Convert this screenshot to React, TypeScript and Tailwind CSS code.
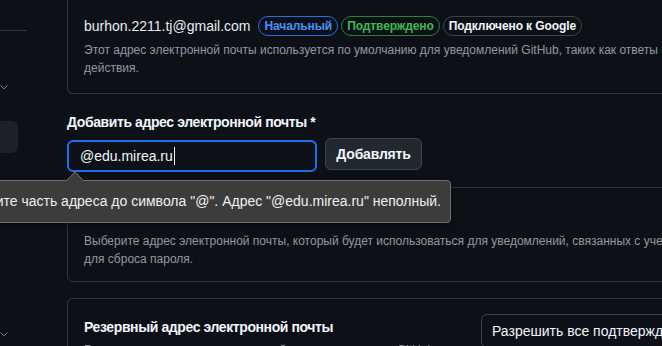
import React from "react";

const font = { fontFamily: '"Liberation Sans", "Noto Sans", sans-serif' };

function Chevron() {
  return (
    <svg width="10" height="10" viewBox="0 0 16 16" className="text-[#8b949e]">
      <path d="M3 6l5 5 5-5" fill="none" stroke="currentColor" strokeWidth="1.5" strokeLinecap="round" strokeLinejoin="round" />
    </svg>
  );
}

export default function App() {
  return (
    <div
      className="relative w-[662px] h-[346px] overflow-hidden bg-[#0d1117] flex text-[#e6edf3]"
      style={font}
    >
      {/* sidebar */}
      <div className="w-[67px] shrink-0 flex flex-col">
        <div className="mt-[30px] h-px w-[27px] bg-[#30363d]" />
        <div className="mt-[51px] -ml-[1px]">
          <Chevron />
        </div>
        <div className="mt-[29px] h-[32px] w-[18px] rounded-r-md bg-[#1c2128]" />
        <div className="mt-[176px] -ml-[1px]">
          <Chevron />
        </div>
      </div>

      {/* main */}
      <div className="w-[700px] shrink-0 flex flex-col">
        {/* card 1 */}
        <div className="border border-t-0 border-[#30363d] rounded-b-md px-4 pt-4 pb-4">
          <div className="flex items-center gap-[3px] h-5">
            <span className="text-[14px] leading-5 text-[#e6edf3] mr-[5px]">burhon.2211.tj@gmail.com</span>
            <span className="h-5 px-[5px] rounded-full border border-[#1f6feb] text-[#4493f8] text-[12px] font-semibold leading-[18px] tracking-[-0.1px]">
              Начальный
            </span>
            <span className="h-5 px-[5px] rounded-full border border-[#238636] text-[#3fb950] text-[12px] font-semibold leading-[18px] tracking-[-0.1px]">
              Подтверждено
            </span>
            <span className="h-5 px-[5px] rounded-full border border-[#3d444d] text-[#f0f6fc] text-[12px] font-semibold leading-[18px] tracking-[-0.1px]">
              Подключено к Google
            </span>
          </div>
          <p className="mt-[5px] text-[12px] leading-[18px] text-[#9198a1] whitespace-nowrap">
            Этот адрес электронной почты используется по умолчанию для уведомлений GitHub, таких как ответы на
            комментарии и
            <br />
            действия.
          </p>
        </div>

        {/* add email */}
        <div className="mt-[18px] text-[14px] leading-5 font-semibold text-[#f0f6fc] tracking-[-0.4px]">
          Добавить адрес электронной почты *
        </div>
        <div className="mt-2 flex items-start gap-2">
          <div className="w-[250px] h-[32px] rounded-md border-2 border-[#1f6feb] bg-[#0d1117] flex items-center pl-[11px]">
            <span className="text-[14px] text-[#f0f6fc]">@edu.mirea.ru</span>
            <span className="w-px h-[18px] bg-[#f0f6fc] ml-px" />
          </div>
          <button className="-mt-[2px] h-[32px] w-[97px] rounded-md border border-[#3d444d] bg-[#212830] text-[14px] font-semibold text-[#f0f6fc] tracking-[-0.2px]">
            Добавлять
          </button>
        </div>

        {/* card 2 */}
        <div className="mt-[15px] border border-[#30363d] rounded-md px-4 pt-4 pb-[13px]">
          <div className="text-[14px] leading-5 font-semibold text-[#f0f6fc] tracking-[-0.4px]">
            Основной адрес электронной почты
          </div>
          <p className="mt-[8px] text-[12px] leading-[18px] text-[#9198a1] whitespace-nowrap">
            Выберите адрес электронной почты, который будет использоваться для уведомлений, связанных с учетной записью,
            и
            <br />
            для сброса пароля.
          </p>
        </div>

        {/* card 3 */}
        <div className="mt-[16px] border border-[#30363d] rounded-md px-4 pt-4 pb-4 flex items-start">
          <div className="w-[397px] shrink-0">
            <div className="pt-[2px] text-[14px] leading-5 font-semibold text-[#f0f6fc] whitespace-nowrap tracking-[-0.4px]">
              Резервный адрес электронной почты
            </div>
            <p className="mt-[4px] text-[12px] leading-[18px] text-[#9198a1] whitespace-nowrap">
              Разрешите восстановление учетной записи с помощью GitHub.
            </p>
          </div>
          <div className="-mt-[1px] h-[34px] w-[220px] shrink-0 rounded-md border border-[#3d444d] bg-[#0d1117] flex items-center pl-[10px] overflow-hidden">
            <span className="text-[14px] text-[#f0f6fc] whitespace-nowrap">Разрешить все подтвержденные адреса</span>
          </div>
        </div>
      </div>

      {/* validation tooltip */}
      <div className="absolute left-[-120px] top-[180px] w-[571px] h-[43px] bg-[#3c3c3c] border border-[#6e6e6e] rounded-[4px] flex items-center justify-end pr-[9px] shadow-[0_2px_6px_rgba(0,0,0,0.5)]">
        <span className="text-[14px] text-[#f0f0f0] whitespace-nowrap">
          Введите часть адреса до символа "@". Адрес "@edu.mirea.ru" неполный.
        </span>
      </div>
      <svg className="absolute left-[66px] top-[171px]" width="18" height="11" viewBox="0 0 18 11">
        <path d="M0 10 L9 1 L18 10" fill="#3c3c3c" stroke="#6e6e6e" strokeWidth="1" />
        <rect x="0" y="10" width="18" height="1" fill="#3c3c3c" />
      </svg>
    </div>
  );
}
